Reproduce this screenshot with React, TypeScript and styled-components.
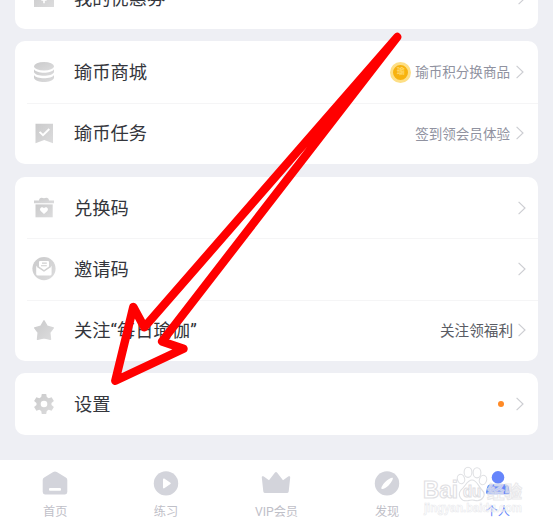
import React from "react";
import styled, { createGlobalStyle } from "styled-components";

const GlobalStyle = createGlobalStyle`
  body {
    margin: 0;
    background: #eeeff4;
    font-family: Roboto, "Noto Sans CJK SC", sans-serif;
  }
`;

const Screen = styled.div`
  position: relative;
  width: 553px;
  height: 527px;
  overflow: hidden;
  display: flex;
  flex-direction: column;
  background: #eeeff4;
`;

const List = styled.main`
  flex: 1;
  display: flex;
  flex-direction: column;
  align-items: stretch;
  gap: 12px;
  padding: 0 15px;
  margin-top: -33px;
`;

const Card = styled.section<{ $height: number; $after?: number }>`
  flex: none;
  display: flex;
  flex-direction: column;
  height: ${(p) => p.$height}px;
  margin-bottom: ${(p) => p.$after ?? 0}px;
  border-radius: 10px;
  background: #fff;
`;

const Row = styled.div`
  flex: 1;
  display: flex;
  align-items: center;
  margin-left: 12px;
  padding-right: 14px;
  & + & {
    box-shadow: inset 0 1px 0 #f5f5f6;
  }
`;

const RowIcon = styled.span`
  display: flex;
  width: 34px;
  margin-right: 13px;
  justify-content: center;
`;

const Title = styled.span`
  flex: 1;
  padding-top: 2px;
  font-size: 18.3px;
  line-height: 26px;
  color: #34363c;
  white-space: nowrap;
`;

const Note = styled.span<{ $strong?: boolean }>`
  padding-top: 1px;
  font-size: ${(p) => (p.$strong ? 14.6 : 13.55)}px;
  line-height: 20px;
  color: ${(p) => (p.$strong ? "#5a5c64" : "#9092a0")};
  margin-right: ${(p) => (p.$strong ? 5 : 6)}px;
  white-space: nowrap;
`;

const Chevron = styled.svg<{ $shift?: boolean }>`
  margin-right: ${(p) => (p.$shift ? -2 : 0)}px;
  fill: none;
  stroke: #cccdd2;
  stroke-width: 1.15;
`;

const Coin = styled.span`
  box-sizing: border-box;
  display: flex;
  align-items: center;
  justify-content: center;
  width: 21px;
  height: 21px;
  margin: 1px 4px 0 0;
  border: 3px solid #fddf86;
  border-radius: 50%;
  background: #f7b20f;
  color: #ffd868;
  font-size: 8px;
  font-weight: 700;
  line-height: 10px;
`;

const Dot = styled.span`
  width: 6.4px;
  height: 6.4px;
  margin-right: 12px;
  border-radius: 50%;
  background: #ff8a26;
`;

const TabBar = styled.nav`
  flex: none;
  display: grid;
  grid-template-columns: repeat(5, 1fr);
  height: 67px;
  background: #fff;
`;

const Tab = styled.div<{ $active?: boolean }>`
  display: flex;
  flex-direction: column;
  align-items: center;
  padding-top: 10px;
  font-size: 12.2px;
  line-height: 18px;
  color: ${(p) => (p.$active ? "#6685fb" : "#bfc0c8")};
  svg {
    flex: none;
    margin-bottom: 5px;
    fill: ${(p) => (p.$active ? "#6685fb" : "#d3d4db")};
  }
`;

const ArrowOverlay = styled.svg`
  position: absolute;
  inset: 0;
  pointer-events: none;
`;

const Watermark = styled.svg`
  position: absolute;
  left: 418px;
  top: 462px;
  pointer-events: none;
  font-family: "Liberation Sans", "Noto Sans CJK SC", sans-serif;
`;

type IconName = "coupon" | "coins" | "task" | "gift" | "mail" | "star" | "gear";

const shapes: Record<IconName, React.ReactNode> = {
  coupon: (
    <>
      <path d="M2 2H22V21H2Z" />
      <path d="M12 11V17.2M9.4 14H14.6" stroke="#fff" strokeWidth="1.6" />
    </>
  ),
  coins: (
    <>
      <ellipse cx="12" cy="6.3" rx="10" ry="4.3" />
      <path d="M2 9.2C4 13.8 20 13.8 22 9.2V12.3C20 17 4 17 2 12.3Z" />
      <path d="M2 15C4 19.3 20 19.3 22 15V18C20 23.3 4 23.3 2 18Z" />
    </>
  ),
  task: (
    <>
      <path d="M3.5 2.7H21V22.3L12.2 19L3.5 22.3Z" />
      <path d="M7.6 10.8L11 14.2L17.3 8" fill="none" stroke="#fff" strokeWidth="1.9" />
    </>
  ),
  gift: (
    <>
      <path d="M2 4.6H7C7 2.2 9 .8 12 2.2C15 .8 17 2.2 17 4.6H22V7.2H2Z" />
      <path d="M3.5 8.4H20.7V21.3H3.5Z" />
      <path d="M12 18.1L8.7 14.9C6.6 12.7 10 9.8 12 12.2C14 9.8 17.4 12.7 15.3 14.9Z" fill="#fff" />
    </>
  ),
  mail: (
    <>
      <circle cx="12" cy="11.6" r="11.6" />
      <path d="M7 9.6V4.9Q7 3.9 8 3.9H16Q17 3.9 17 4.9V9.6L12 13.1Z" fill="#fff" />
      <path d="M4.2 8.8L12 14.1L19.6 8.8V16.9Q19.6 18.4 18 18.4H5.8Q4.2 18.4 4.2 16.9Z" fill="#fff" />
      <path d="M4.8 9.4L12 14.1L19.1 9.4M10 6.1H14.8M9 8.7H14.8" fill="none" stroke="#cfcfcf" strokeWidth="1.1" />
    </>
  ),
  star: (
    <path
      d="M12 2.8L15.1 8.2L21.3 9.9L17.8 14.5L18.5 21.4L12 19.9L5.5 21.4L6.2 14.5L2.7 9.9L8.9 8.2Z"
      stroke="url(#silver)"
      strokeWidth="1.4"
      strokeLinejoin="round"
    />
  ),
  gear: (
    <path
      fillRule="evenodd"
      d="M9.8 2H14.2L14.8 5.1L16.7 6.2L19.6 5.2L21.9 9L19.5 11V13L21.9 15L19.6 18.8L16.7 17.8L14.8 18.9L14.2 22H9.8L9.2 18.9L7.3 17.8L4.4 18.8L2.1 15L4.5 13V11L2.1 9L4.4 5.2L7.3 6.2L9.2 5.1ZM12 8.7A3.3 3.3 0 1 0 12 15.3A3.3 3.3 0 1 0 12 8.7Z"
    />
  ),
};

function Icon({ name }: { name: IconName }) {
  return (
    <RowIcon>
      <svg width="24" height="24" viewBox="0 0 24 24" fill="url(#silver)">
        {shapes[name]}
      </svg>
    </RowIcon>
  );
}

interface ItemProps {
  icon: IconName;
  title: string;
  note?: string;
  strong?: boolean;
  shift?: boolean;
  coin?: boolean;
  dot?: boolean;
}

function Item({ icon, title, note, strong, shift, coin, dot }: ItemProps) {
  return (
    <Row>
      <Icon name={icon} />
      <Title>{title}</Title>
      {coin && <Coin>瑜</Coin>}
      {note && <Note $strong={strong}>{note}</Note>}
      {dot && <Dot />}
      <Chevron $shift={shift} width="8" height="14" viewBox="0 0 8 14">
        <path d="M0.6 0.8L7 7L0.6 13.2" />
      </Chevron>
    </Row>
  );
}

export default function App() {
  return (
    <Screen>
      <GlobalStyle />
      <List>
        <Card $height={62}>
          <Item icon="coupon" title="我的优惠券" shift />
        </Card>
        <Card $height={123} $after={1}>
          <Item icon="coins" title="瑜币商城" note="瑜币积分换商品" coin />
          <Item icon="task" title="瑜币任务" note="签到领会员体验" />
        </Card>
        <Card $height={184}>
          <Item icon="gift" title="兑换码" shift />
          <Item icon="mail" title="邀请码" shift />
          <Item icon="star" title="关注“每日瑜伽”" note="关注领福利" strong shift />
        </Card>
        <Card $height={62}>
          <Item icon="gear" title="设置" dot />
        </Card>
      </List>
      <TabBar>
        <Tab>
          <svg width="28" height="28" viewBox="0 0 28 28">
            <path d="M12.2 2.1Q14 0.8 15.8 2.1L24.8 7.4Q26.3 8.3 26.3 10V22Q26.3 24.4 24 24.4H4Q1.7 24.4 1.7 22V10Q1.7 8.3 3.2 7.4Z" />
            <rect x="8" y="18" width="12" height="2.8" rx="1" fill="#fff" />
          </svg>
          首页
        </Tab>
        <Tab>
          <svg width="28" height="28" viewBox="0 0 28 28">
            <circle cx="14" cy="13.4" r="12.2" />
            <path d="M11.8 9.2L18 13.4L11.8 17.6Z" fill="#fff" stroke="#fff" strokeWidth="1.6" strokeLinejoin="round" />
          </svg>
          练习
        </Tab>
        <Tab>
          <svg width="30" height="28" viewBox="0 0 30 28">
            <path d="M.8 7.4C.6 6.2 1.8 5.8 2.8 6.6L8 10.3L13.8 2.7Q15 1.2 16.2 2.7L22 10.3L27.2 6.6C28.2 5.8 29.4 6.2 29.2 7.4L27.7 21.5Q27.4 23 25.9 23H4.1Q2.6 23 2.3 21.5Z" />
          </svg>
          VIP会员
        </Tab>
        <Tab>
          <svg width="28" height="28" viewBox="0 0 28 28">
            <circle cx="14" cy="13.4" r="12.2" />
            <path d="M8.6 18.8C7.7 18 9.5 14.6 12.2 11.9C15 9.1 19 7 19.7 7.8C20.5 8.6 18.5 12.5 15.8 15.2C13.1 17.9 9.5 19.7 8.6 18.8Z" fill="#fff" />
          </svg>
          发现
        </Tab>
        <Tab $active>
          <svg width="28" height="28" viewBox="0 0 28 28">
            <circle cx="14" cy="7.4" r="6.3" />
            <path d="M2 22L3.2 17Q4 14.2 7 14.2H21Q24 14.2 24.8 17L26 22Q26.3 24.2 24 24.2H4Q1.8 24.2 2 22Z" />
          </svg>
          个人
        </Tab>
      </TabBar>

      <Watermark width="115" height="56" viewBox="0 0 115 56">
        <g fill="#fff" fillOpacity="0.75" stroke="#dfe0e3" strokeWidth="1.1">
          <text x="5" y="36" fontSize="23" fontWeight="700" textLength="35" lengthAdjust="spacingAndGlyphs">Bai</text>
          <ellipse cx="43" cy="17" rx="3.6" ry="4.8" transform="rotate(-18 43 17)" />
          <ellipse cx="50" cy="10.3" rx="3.9" ry="5.1" />
          <ellipse cx="59" cy="10.8" rx="3.9" ry="5.1" />
          <ellipse cx="65" cy="18" rx="3.6" ry="4.8" transform="rotate(18 65 18)" />
          <path d="M54 18C59 18 60 24 64 28C69 33 64 40 57 38.4Q54 37.6 50 38.6C43 40 39 33 43 28C48 24 49 18 54 18Z" />
          <text x="45" y="35" fontSize="16" fontWeight="700" textLength="18" lengthAdjust="spacingAndGlyphs">du</text>
          <text x="69" y="35.5" fontSize="17.5" fontWeight="700" fillOpacity="0.55" strokeOpacity="0.7">经验</text>
        </g>
        <text x="6" y="49.5" fontSize="12" fontWeight="700" textLength="98" lengthAdjust="spacingAndGlyphs" fill="#fff" fillOpacity="0.55" stroke="#e2e3e7" strokeWidth="0.6" strokeOpacity="0.8">
          jingyan.baidu.com
        </text>
      </Watermark>

      <ArrowOverlay width="553" height="527" viewBox="0 0 553 527">
        <defs>
          <linearGradient id="silver" x1="0" y1="0" x2="1" y2="1">
            <stop offset="0" stopColor="#cacacb" />
            <stop offset="1" stopColor="#dcdcdd" />
          </linearGradient>
        </defs>
        <path
          d="M397.3 37L144.3 327.3L133.3 307L115.3 380.8L183.5 348.8L162 341.5Z"
          fill="none"
          stroke="#ff0000"
          strokeWidth="8.4"
          strokeLinejoin="round"
        />
      </ArrowOverlay>
    </Screen>
  );
}
